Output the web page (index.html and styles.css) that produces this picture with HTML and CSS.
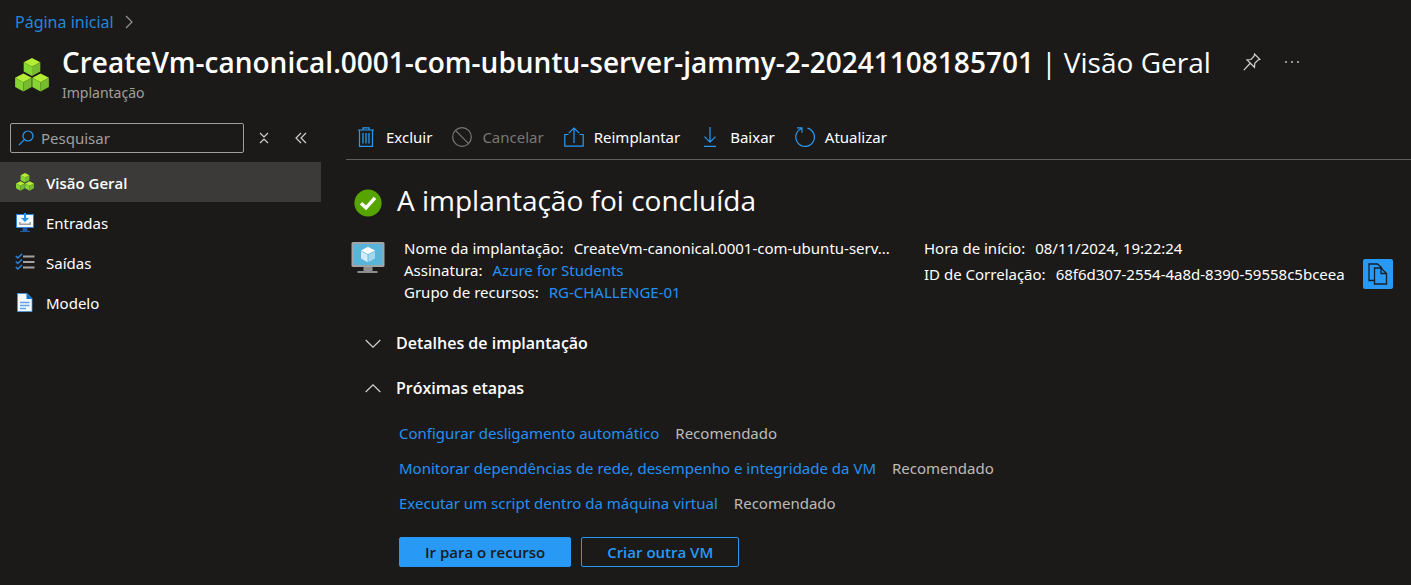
FILE: index.html
```html
<!DOCTYPE html>
<html lang="pt-BR">
<head>
<meta charset="utf-8">
<meta name="viewport" content="width=device-width, initial-scale=1">
<title>Visão Geral da implantação</title>
<link rel="stylesheet" href="styles.css">
</head>
<body>
<svg class="defs" aria-hidden="true">
  <symbol id="cubes" viewBox="0 0 34 34">
    <g id="cube">
      <path fill="#b4ec36" d="M17 0l8.300 4.200L17 8.800 8.700 4.200z"/>
      <path fill="#86d633" d="M8.700 4.200L17 8.800v9.200l-8.300-4.500z"/>
      <path fill="#76bc2d" d="M25.300 4.200L17 8.800v9.200l8.300-4.500z"/>
    </g>
    <use href="#cube" x="-8.600" y="15.500"/>
    <use href="#cube" x="8.600" y="15.500"/>
  </symbol>
</svg>
<header class="header">
  <nav class="breadcrumb" aria-label="Trilha">
    <a href="#">Página inicial</a>
    <svg width="8" height="14" viewBox="0 0 8 14" class="line dim"><path d="M1 1l6 6-6 6"/></svg>
  </nav>
  <div class="title-row">
    <svg class="title-icon" width="34" height="34"><use href="#cubes"/></svg>
    <div class="title-text">
      <div class="title-line">
        <h1 class="title"><strong>CreateVm-canonical.0001-com-ubuntu-server-jammy-2-20241108185701</strong> | Visão Geral</h1>
        <button class="icon-btn" aria-label="Fixar"><svg width="18" height="18" viewBox="0 0 18 18" class="line"><path d="M11.500 1l5.500 5.500-2 .5-3.200 3.300-.3 4L4 7l4-.5L11.200 3zM7 10.500L.8 17.200"/></svg></button>
        <button class="icon-btn" aria-label="Mais"><svg width="16" height="4" viewBox="0 0 16 4" fill="#d2d0ce"><circle cx="2" cy="2" r=".9"/><circle cx="8" cy="2" r=".9"/><circle cx="14" cy="2" r=".9"/></svg></button>
      </div>
      <p class="subtitle">Implantação</p>
    </div>
  </div>
</header>
<div class="body">
  <aside class="sidebar">
    <div class="search-row">
      <label class="search">
        <svg width="16" height="16" viewBox="0 0 16 16" class="line blue"><circle cx="10" cy="6" r="5"/><path d="M6.300 9.700L.8 15.200"/></svg>
        <input type="text" placeholder="Pesquisar" aria-label="Pesquisar">
      </label>
      <button class="icon-btn" aria-label="Recolher grupos"><svg width="10" height="12" viewBox="0 0 10 12" class="line"><path d="M1 1l4 4 4-4M1 11l4-4 4 4"/></svg></button>
      <button class="icon-btn" aria-label="Recolher menu"><svg width="12" height="12" viewBox="0 0 12 12" class="line"><path d="M6 1L1 6l5 5M11 1L6 6l5 5"/></svg></button>
    </div>
    <nav class="menu">
      <a href="#" class="active"><svg width="20" height="20" viewBox="0 0 20 20"><use href="#cubes" x="1" y="0" width="18" height="18"/></svg>Visão Geral</a>
      <a href="#"><svg width="20" height="20" viewBox="0 0 20 20"><path fill="#1f5ba8" d="M8 14h4l.7 4H15v1H5v-1h2.300z"/><path fill="#2a83d8" d="M1 1h18v14H1z"/><path fill="#f2f7fb" d="M2 2h16v12H2z"/><path fill="#2492e8" d="M9 0h2v5h3l-4 4-4-4h3z"/><path fill="#a0a0a0" d="M4 9h1.500v1.500h9V9H16v3H4z"/></svg>Entradas</a>
      <a href="#"><svg width="20" height="20" viewBox="0 0 20 20" fill="none"><path stroke="#a3a3a3" stroke-width="1.800" d="M8 3.500h11.500M8 9h11.500M8 14.500h11.500"/><path stroke="#2a83d8" stroke-width="1.600" d="M.8 3l2 2L7 1M.8 8.500l2 2L7 6.500M.8 14l2 2L7 12"/></svg>Saídas</a>
      <a href="#"><svg width="20" height="20" viewBox="0 0 20 20"><path fill="#f7fafd" stroke="#4297de" stroke-width=".8" d="M2.500.5H12l5 5v13h-14.500z"/><path fill="#1273c5" d="M11.500 0L17.500 6h-6z"/><path stroke="#5a9ff0" stroke-width="1.400" d="M5 9.500h9.500M5 12.500h9.500M5 15.500h6"/></svg>Modelo</a>
    </nav>
  </aside>
  <main class="main">
    <div class="toolbar">
      <button><svg width="20" height="20" viewBox="0 0 20 20" class="line blue"><path d="M2 3h16M7 3V.8h6V3M3.500 3v16.300h13V3"/><path stroke-width="1.300" d="M7 6v10.500M10 6v10.500M13 6v10.500"/></svg>Excluir</button>
      <button disabled><svg width="20" height="20" viewBox="0 0 20 20" class="line"><circle cx="10" cy="10" r="9.300"/><path d="M3.400 3.400l13.200 13.200"/></svg>Cancelar</button>
      <button><svg width="20" height="20" viewBox="0 0 20 20" class="line blue"><path d="M4.500 7.500H.8v11.700h18.400V7.500h-3.700M10 16V1M4.800 6.200L10 1l5.200 5.200"/></svg>Reimplantar</button>
      <button><svg width="20" height="20" viewBox="0 0 20 20" class="line blue"><path d="M10 0v15M4.500 9.700L10 15.200l5.500-5.500M4 19.300h12"/></svg>Baixar</button>
      <button><svg width="20" height="20" viewBox="0 0 20 20" class="line blue"><path d="M12.500 1.100a9.300 9.300 0 1 1-6 .4M2 .8h5v5"/></svg>Atualizar</button>
    </div>
    <div class="status">
      <svg width="28" height="28" viewBox="0 0 28 28"><circle cx="14" cy="14" r="13.600" fill="#57a300"/><path d="M7 14.300l5 4.500L21 8.800" fill="none" stroke="#fff" stroke-width="3.400"/></svg>
      <h2>A implantação foi concluída</h2>
    </div>
    <section class="summary">
      <svg width="34" height="32" viewBox="0 0 34 32"><path fill="#8b8d8f" d="M12.500 24h9v5h5v2h-20v-2h6z"/><rect x=".5" width="33" height="25" rx="1.500" fill="#a2a4a5"/><path fill="#59b4d9" d="M2.500 2h29v21h-29z"/><path fill="#fff" d="M17 4.800l7 3.700-7 3.700-7-3.700z"/><path fill="#d4ecf6" d="M10 9.300l6.600 3.500v7.500L10 16.500z"/><path fill="#a5d7eb" d="M24 9.300l-6.600 3.500v7.500l6.600-3.800z"/></svg>
      <dl class="facts">
        <div><dt>Nome da implantação:</dt><dd title="CreateVm-canonical.0001-com-ubuntu-server-jammy-2-20241108185701">CreateVm-canonical.0001-com-ubuntu-serv...</dd></div>
        <div><dt>Assinatura:</dt><dd><a href="#">Azure for Students</a></dd></div>
        <div><dt>Grupo de recursos:</dt><dd><a href="#">RG-CHALLENGE-01</a></dd></div>
      </dl>
      <dl class="facts facts-right">
        <div><dt>Hora de início:</dt><dd>08/11/2024, 19:22:24</dd></div>
        <div><dt>ID de Correlação:</dt><dd>68f6d307-2554-4a8d-8390-59558c5bceea</dd><dd><button class="copy" aria-label="Copiar"><svg width="20" height="22" viewBox="0 0 20 22" fill="none" stroke="#15202b" stroke-width="1.300"><path d="M6.500 17.500H1V1h8.500L14 5M6.500 5H13l5.500 5.500V21h-12zM13 5v5.500h5.500"/></svg></button></dd></div>
      </dl>
    </section>
    <button class="toggle" aria-expanded="false"><svg width="16" height="9" viewBox="0 0 16 9" class="line"><path d="M.7 1L8 8.200 15.300 1"/></svg>Detalhes de implantação</button>
    <button class="toggle" aria-expanded="true"><svg width="16" height="9" viewBox="0 0 16 9" class="line"><path d="M.7 8L8 .8 15.300 8"/></svg>Próximas etapas</button>
    <ul class="steps">
      <li><a href="#">Configurar desligamento automático</a><span>Recomendado</span></li>
      <li><a href="#">Monitorar dependências de rede, desempenho e integridade da VM</a><span>Recomendado</span></li>
      <li><a href="#">Executar um script dentro da máquina virtual</a><span>Recomendado</span></li>
    </ul>
    <div class="actions">
      <button class="btn primary">Ir para o recurso</button>
      <button class="btn">Criar outra VM</button>
    </div>
  </main>
</div>
</body>
</html>
```
FILE: styles.css
```css
* { box-sizing: border-box; }
body {
  margin: 0;
  background: #1b1a19;
  color: #fff;
  font: 15px/22px "Noto Sans", "Open Sans", sans-serif;
}
h1, h2, p, dl, dd, ul { margin: 0; padding: 0; }
a { color: #2490f4; text-decoration: none; }
button { font: inherit; color: inherit; background: none; border: 0; padding: 0; }
svg { flex: none; display: block; }
.defs { position: absolute; width: 0; height: 0; }
.line { fill: none; stroke: #d2d0ce; stroke-width: 1.2; }
.dim { stroke: #979593; }
.blue { stroke: #2899f5; }

.header { padding: 11px 16px 0 15px; }
.breadcrumb { display: flex; align-items: center; gap: 11px; font-size: 16px; }
.breadcrumb a { color: #2488d8; }
.title-row { display: flex; gap: 13px; padding-top: 8px; }
.title-icon { margin-top: 17px; }
.title-text { min-width: 0; }
.title-line { display: flex; align-items: center; height: 42px; }
.title { font-family: "Open Sans", sans-serif; font-size: 28px; line-height: 40px; font-weight: 400; white-space: nowrap; }
.title strong { font-weight: 600; }
.title + .icon-btn { margin-left: 32px; }
.title-line .icon-btn + .icon-btn { margin-left: 23px; }
.subtitle { font-size: 14px; line-height: 20px; color: #a19f9d; }

.body { display: flex; gap: 25px; padding-top: 20px; }
.sidebar { flex: 0 0 321px; }
.search-row { display: flex; align-items: center; padding-left: 10px; }
.search {
  display: flex; align-items: center; gap: 7px;
  width: 234px; height: 30px; padding: 0 7px;
  border: 1px solid #a19f9d; border-radius: 2px;
}
.search input {
  flex: 1; min-width: 0; padding: 0; border: 0; outline: 0;
  background: none; color: #fff; font: inherit;
}
.search input::placeholder { color: #a19f9d; opacity: 1; }
.search + .icon-btn { margin: 0 26px 0 15px; }
.menu { padding-top: 9px; }
.menu a { display: flex; align-items: center; gap: 11px; height: 40px; padding: 2px 15px 0; color: #fff; }
.menu .active { background: #3b3a39; font-family: "Open Sans", sans-serif; font-weight: 600; }

.main { flex: 1; min-width: 0; }
.toolbar { display: flex; gap: 20px; height: 37px; padding: 0 10px 8px; border-bottom: 1px solid #605e5c; }
.toolbar button { display: flex; align-items: center; gap: 10px; white-space: nowrap; }
.toolbar button:disabled { color: #797775; }
.toolbar button:disabled .line { stroke: #797775; }
.status { display: flex; align-items: center; gap: 15px; padding: 20px 0 0 8px; }
.status h2 { font-family: "Open Sans", sans-serif; font-size: 28px; line-height: 40px; font-weight: 400; }
.status svg { margin-top: 6px; }
.summary { display: flex; padding: 17px 18px 0 5px; }
.summary > svg { margin-top: 5px; }
.facts { flex: 0 1 498px; min-width: 0; margin-left: 19px; }
.facts div { display: flex; gap: 10px; white-space: nowrap; }
.facts-right { flex: 1 0 auto; margin-left: 22px; }
.facts-right div { align-items: center; }
.facts-right div + div { height: 30px; }
.facts-right dd + dd { margin-left: auto; }
.copy { display: grid; place-items: center; width: 30px; height: 30px; border-radius: 2px; background: #2899f5; }
.toggle { display: flex; align-items: center; gap: 15px; padding: 17px 0 6px 19px; font-family: "Open Sans", sans-serif; font-size: 16px; font-weight: 600; }
.summary + .toggle { padding-top: 29px; }
.steps { list-style: none; display: grid; gap: 13px; padding: 17px 0 0 53px; }
.steps li { display: flex; gap: 16px; color: #bebbb8; }
.actions { display: flex; gap: 10px; padding: 23px 0 18px 53px; }
.btn { height: 30px; padding: 0 25px; border: 1px solid #2899f5; border-radius: 2px; color: #2899f5; font-family: "Open Sans", sans-serif; font-weight: 600; line-height: 20px; }
.primary { background: #2899f5; color: #1b1a19; }
```
